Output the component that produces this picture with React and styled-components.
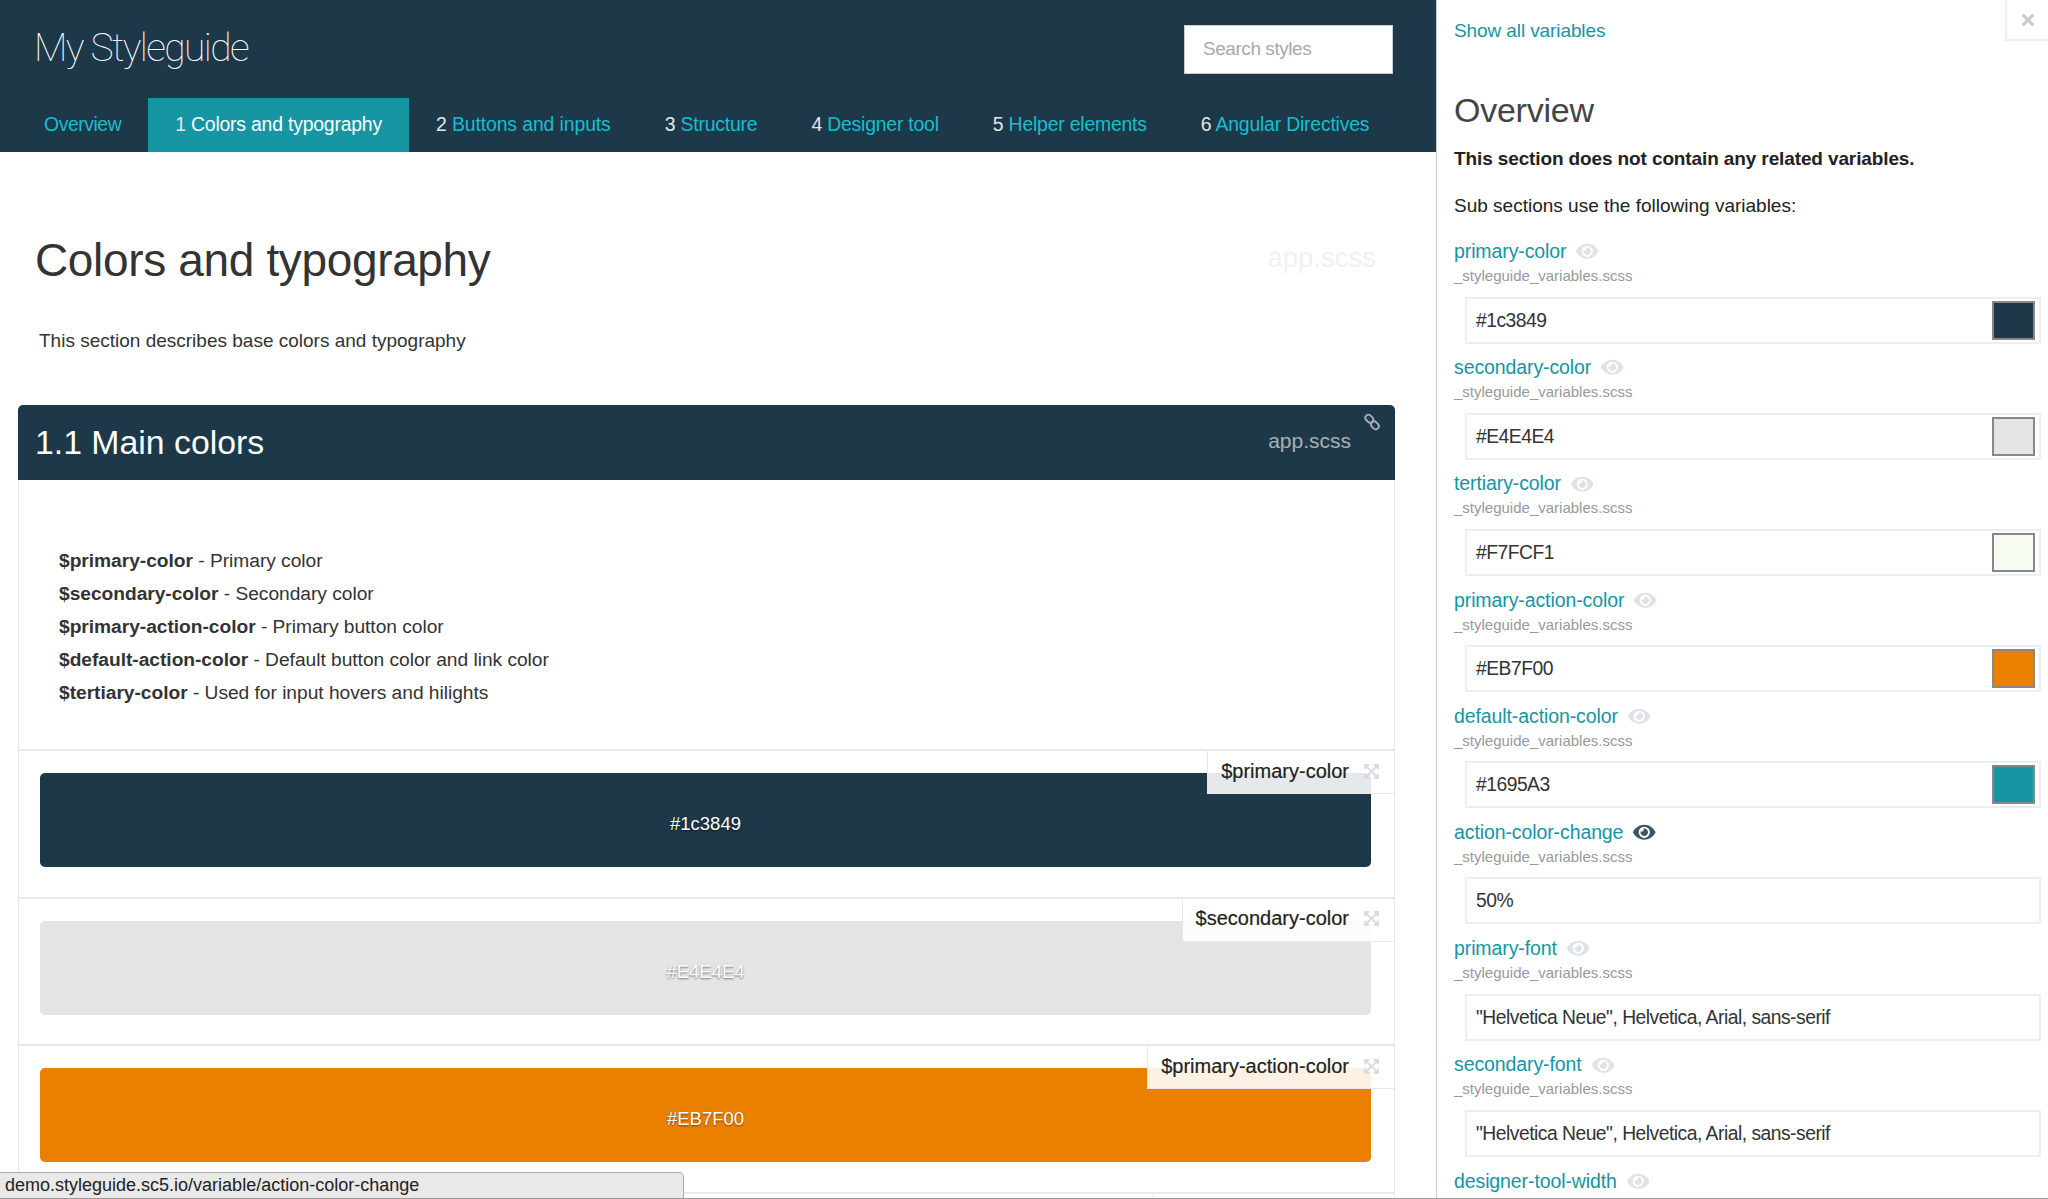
import React from 'react';
import styled, { createGlobalStyle } from 'styled-components';
import { FaEye, FaTimes, FaExpandArrowsAlt } from 'react-icons/fa';

const GlobalStyle = createGlobalStyle`
	html, body {
		margin: 0;
		padding: 0;
		background: #fff;
		font-family: "Liberation Sans", Arial, sans-serif;
	}
`;

const swatches = [
	{ name: '$primary-color', value: '#1c3849' },
	{ name: '$secondary-color', value: '#E4E4E4' },
	{ name: '$primary-action-color', value: '#EB7F00' },
];

const legend = [
	['$primary-color', 'Primary color'],
	['$secondary-color', 'Secondary color'],
	['$primary-action-color', 'Primary button color'],
	['$default-action-color', 'Default button color and link color'],
	['$tertiary-color', 'Used for input hovers and hilights'],
];

const navItems = [
	['', 'Overview'],
	['1', 'Colors and typography', true],
	['2', 'Buttons and inputs'],
	['3', 'Structure'],
	['4', 'Designer tool'],
	['5', 'Helper elements'],
	['6', 'Angular Directives'],
];

const FONT_STACK = '"Helvetica Neue", Helvetica, Arial, sans-serif';

const variables = [
	{ name: 'primary-color', value: '#1c3849', color: '#1c3849' },
	{ name: 'secondary-color', value: '#E4E4E4', color: '#E4E4E4' },
	{ name: 'tertiary-color', value: '#F7FCF1', color: '#F7FCF1' },
	{ name: 'primary-action-color', value: '#EB7F00', color: '#EB7F00' },
	{ name: 'default-action-color', value: '#1695A3', color: '#1695A3' },
	{ name: 'action-color-change', value: '50%', active: true },
	{ name: 'primary-font', value: FONT_STACK },
	{ name: 'secondary-font', value: FONT_STACK },
];

const ChainIcon = () => (
	<svg width="20" height="20" viewBox="0 0 20 20" fill="none" stroke="#a3adb4" strokeWidth="1.9">
		<rect x="3" y="3.6" width="8.6" height="6.2" rx="3.1" transform="rotate(45 7.3 6.7)" />
		<rect x="8.6" y="10.2" width="8.6" height="6.2" rx="3.1" transform="rotate(45 12.9 13.3)" />
	</svg>
);

const EyeButton = ({ active }) => (
	<EyeWrap $active={active}>
		<FaEye />
	</EyeWrap>
);

const App = () => (
	<Page>
		<GlobalStyle />
		<Main>
			<Header>
				<TopRow>
					<Logo>My Styleguide</Logo>
					<Search>Search styles</Search>
				</TopRow>
				<Nav>
					{navItems.map(([num, label, active]) => (
						<NavItem key={label} $active={active}>
							{num && <NavNum>{num} </NavNum>}
							<span>{label}</span>
						</NavItem>
					))}
				</Nav>
			</Header>

			<TitleRow>
				<PageTitle>Colors and typography</PageTitle>
				<FaintFile>app.scss</FaintFile>
			</TitleRow>
			<Intro>This section describes base colors and typography</Intro>

			<Section>
				<SectionBar>
					<SectionTitle>1.1 Main colors</SectionTitle>
					<SectionFile>app.scss</SectionFile>
					<ChainLink>
						<ChainIcon />
					</ChainLink>
				</SectionBar>
				<SectionBody>
					<Legend>
						{legend.map(([name, text]) => (
							<LegendLine key={name}>
								<b>{name}</b> - {text}
							</LegendLine>
						))}
					</Legend>
					{swatches.map((s) => (
						<SwatchRow key={s.name}>
							<Swatch $bg={s.value}>{s.value}</Swatch>
							<SwatchLabel>
								<span>{s.name}</span>
								<FaExpandArrowsAlt />
							</SwatchLabel>
						</SwatchRow>
					))}
					{/* next row only just starts at the bottom of the window */}
					<SwatchRow>
						<EmptyLabel />
					</SwatchRow>
				</SectionBody>
			</Section>
		</Main>

		<Side>
			<CloseBox>
				<FaTimes />
			</CloseBox>
			<ShowAll>Show all variables</ShowAll>
			<SideTitle>Overview</SideTitle>
			<SideNote>This section does not contain any related variables.</SideNote>
			<SideSub>Sub sections use the following variables:</SideSub>
			{variables.map((v) => (
				<Variable key={v.name}>
					<VarName>
						<span>{v.name}</span>
						<EyeButton active={v.active} />
					</VarName>
					<VarFile>_styleguide_variables.scss</VarFile>
					<VarField>
						<span>{v.value}</span>
						{v.color && <VarColor $bg={v.color} />}
					</VarField>
				</Variable>
			))}
			<Variable>
				<VarName>
					<span>designer-tool-width</span>
					<EyeButton />
				</VarName>
			</Variable>
		</Side>

		<StatusBar>demo.styleguide.sc5.io/variable/action-color-change</StatusBar>
		<WindowEdge />
	</Page>
);

const Page = styled.div`
	position: relative;
	display: flex;
	width: 2048px;
	height: 1199px;
	overflow: hidden;
	color: #333;
`;

const Main = styled.div`
	width: 1436px;
	flex: none;
`;

const Header = styled.header`
	height: 152px;
	background: #1c3849;
	display: flex;
	flex-direction: column;
`;

const TopRow = styled.div`
	display: flex;
	flex: none;
	justify-content: space-between;
	align-items: flex-start;
	box-sizing: border-box;
	height: 98px;
	padding: 25px 43px 0 34px;
`;

const Logo = styled.div`
	font-family: Roboto, sans-serif;
	font-weight: 100;
	font-size: 39px;
	line-height: 46px;
	letter-spacing: -1.6px;
	color: #fff;
`;

const Search = styled.div`
	width: 209px;
	height: 49px;
	box-sizing: border-box;
	padding-left: 18px;
	background: #fff;
	border: 1px solid #ccc;
	color: #a9a9a9;
	font-size: 19px;
	line-height: 45px;
	letter-spacing: -0.45px;
`;

const Nav = styled.nav`
	display: flex;
	flex: none;
	padding-left: 17px;
	height: 54px;
`;

const NavItem = styled.div`
	padding: 0 27px;
	font-size: 19.4px;
	line-height: 52px;
	white-space: pre;
	letter-spacing: -0.2px;
	color: ${(p) => (p.$active ? '#fff' : '#19bdcf')};
	background: ${(p) => (p.$active ? '#1695a3' : 'transparent')};

	&:first-child {
		letter-spacing: -0.45px;
	}

	&:nth-child(3) {
		letter-spacing: -0.1px;
	}
`;

const NavNum = styled.span`
	color: #e6e6e6;
`;

const TitleRow = styled.div`
	display: flex;
	justify-content: space-between;
	align-items: center;
	height: 52px;
	margin-top: 82px;
	padding: 0 60px 0 35px;
`;

const PageTitle = styled.h1`
	margin: 0;
	font-size: 46px;
	font-weight: 400;
	letter-spacing: -0.35px;
	color: #333;
`;

const FaintFile = styled.span`
	margin-bottom: 5px;
	font-size: 27.5px;
	color: #f1f1f1;
`;

const Intro = styled.p`
	margin: 42px 0 0 39px;
	font-size: 19px;
	line-height: 26px;
`;

const Section = styled.section`
	margin: 51px 41px 0 18px;
`;

const SectionBar = styled.div`
	position: relative;
	height: 75px;
	display: flex;
	justify-content: space-between;
	align-items: center;
	padding: 0 44px 0 17px;
	background: #1c3849;
	border-radius: 5px 5px 0 0;
`;

const SectionTitle = styled.h2`
	margin: 0;
	font-size: 33.8px;
	font-weight: 400;
	color: #fff;
`;

const SectionFile = styled.span`
	margin-bottom: 4px;
	font-size: 21px;
	color: #a9b1b7;
`;

const ChainLink = styled.div`
	position: absolute;
	top: 7px;
	right: 13px;
`;

const SectionBody = styled.div`
	border: solid #e8e8e8;
	border-width: 0 1px;
`;

const Legend = styled.div`
	padding: 64px 0 40px 40px;
`;

const LegendLine = styled.div`
	font-size: 19.2px;
	line-height: 33px;
	letter-spacing: -0.03px;
`;

const SwatchRow = styled.div`
	position: relative;
	height: 147.5px;
	box-sizing: border-box;
	padding: 22px 23px 0 21px;
	border-top: 2px solid #e8e8e8;
`;

const Swatch = styled.div`
	height: 94px;
	border-radius: 5px;
	background: ${(p) => p.$bg};
	color: #fff;
	font-size: 18.5px;
	line-height: 102px;
	text-align: center;
	text-shadow: 0 1px 2px rgba(0, 0, 0, 0.5);
`;

const SwatchLabel = styled.div`
	position: absolute;
	top: 0;
	right: 0;
	height: 43px;
	box-sizing: border-box;
	display: flex;
	align-items: center;
	gap: 14px;
	padding: 0 14px 2px 13px;
	background: rgba(255, 255, 255, 0.89);
	border: solid #e8e8e8;
	border-width: 0 0 1px 1px;
	font-size: 20px;
	-webkit-text-stroke: 0.2px #222;
	color: #222;

	svg {
		width: 17px;
		height: 17px;
		color: #d8dcdf;
	}
`;

const EmptyLabel = styled(SwatchLabel)`
	width: 241px;
`;

const Side = styled.aside`
	flex: 1;
	position: relative;
	box-sizing: border-box;
	padding-left: 17px;
	border-left: 1px solid #ccc;
`;

const CloseBox = styled.div`
	position: absolute;
	top: 0;
	right: 0;
	width: 41px;
	height: 39px;
	display: flex;
	align-items: center;
	justify-content: center;
	border: solid #eee;
	border-width: 0 0 2px 2px;
	color: #ccc;
	font-size: 18px;
`;

const ShowAll = styled.div`
	padding-top: 19px;
	font-size: 19px;
	line-height: 24px;
	letter-spacing: -0.1px;
	color: #1695a3;
`;

const SideTitle = styled.h2`
	margin: 45px 0 0;
	font-size: 34px;
	line-height: 44px;
	font-weight: 400;
	letter-spacing: -0.25px;
	color: #444;
`;

const SideNote = styled.p`
	margin: 13.5px 0 0;
	font-size: 19px;
	line-height: 26px;
	font-weight: 700;
	letter-spacing: -0.12px;
	color: #222;
`;

const SideSub = styled.p`
	margin: 21px 0 0;
	font-size: 19px;
	line-height: 26px;
	color: #222;
`;

const Variable = styled.div`
	height: 116.2px;
`;

const VarName = styled.div`
	display: flex;
	align-items: center;
	gap: 10px;
	padding-top: 20px;
	height: 26px;
	font-size: 19.5px;
	letter-spacing: -0.1px;
	color: #1695a3;
`;

const EyeWrap = styled.span`
	display: flex;
	font-size: 22.5px;
	color: ${(p) => (p.$active ? '#3c5666' : '#dfe3e6')};
`;

const VarFile = styled.div`
	margin-top: 0.5px;
	font-size: 15px;
	line-height: 22px;
	color: #999;
`;

const VarField = styled.div`
	position: relative;
	box-sizing: border-box;
	height: 47px;
	margin: 9.5px 7px 0 11px;
	padding-left: 9px;
	border: 2px solid #eee;
	font-size: 19.3px;
	line-height: 43px;
	letter-spacing: -0.5px;
	color: #333;
`;

const VarColor = styled.span`
	position: absolute;
	top: 2px;
	right: 4px;
	width: 43px;
	height: 39px;
	box-sizing: border-box;
	border: 2px solid #888;
	background: ${(p) => p.$bg};
`;

const StatusBar = styled.div`
	position: absolute;
	left: 0;
	bottom: 0;
	width: 684px;
	height: 27px;
	box-sizing: border-box;
	padding-left: 5px;
	background: #e9e9e9;
	border: 1px solid #aaa;
	border-left: 0;
	border-radius: 0 5px 0 0;
	font-size: 18px;
	line-height: 25px;
	color: #222;
`;

const WindowEdge = styled.div`
	position: absolute;
	left: 0;
	right: 0;
	bottom: 0;
	height: 1px;
	background: #999;
`;

export default App;
